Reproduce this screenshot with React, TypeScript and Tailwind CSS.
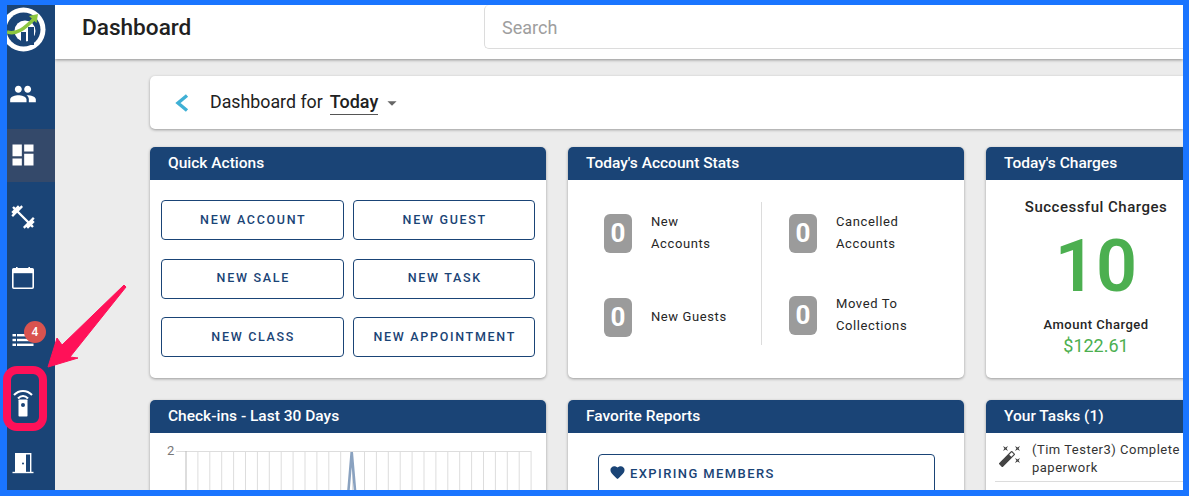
import React from 'react';
import { MdPeople, MdDashboard, MdFitnessCenter, MdArrowDropDown, MdFavorite, MdAutoFixHigh } from 'react-icons/md';

const navy = 'bg-[#1a4476]';

const Logo = () => (
  <svg width="48" height="52" viewBox="0 0 48 52">
    <circle cx="16.5" cy="24.5" r="22" fill="#fff" />
    <circle cx="16.5" cy="24.5" r="17" fill="#1a4476" />
    <circle cx="18" cy="26" r="10.5" fill="#fff" />
    <rect x="14" y="27" width="5" height="13" fill="#1a4476" />
    <rect x="21" y="22" width="6" height="18" fill="#1a4476" />
    <path d="M0 27 C10 30 18 23 27 14" fill="none" stroke="#8cc63f" strokeWidth="3.5" />
    <path d="M22 11 L31 9 L29.5 18 Z" fill="#8cc63f" />
  </svg>
);

const CalendarIcon = () => (
  <svg width="24" height="24" viewBox="0 0 24 24" fill="none">
    <rect x="1.8" y="2.8" width="20.4" height="19.4" rx="1" stroke="#fff" strokeWidth="1.6" />
    <rect x="1.8" y="2.8" width="20.4" height="4.4" fill="#fff" />
    <rect x="5" y="1" width="1.6" height="2.5" fill="#fff" />
    <rect x="17.4" y="1" width="1.6" height="2.5" fill="#fff" />
  </svg>
);

const ListIcon = () => (
  <svg width="22" height="14" viewBox="0 0 22 14" fill="#fff">
    <rect x="0.5" y="1" width="3.5" height="2.4" />
    <rect x="5" y="1" width="16.5" height="2.4" />
    <rect x="0.5" y="5.8" width="3.5" height="2.4" />
    <rect x="5" y="5.8" width="16.5" height="2.4" />
    <rect x="0.5" y="10.6" width="3.5" height="2.4" />
    <rect x="5" y="10.6" width="16.5" height="2.4" />
  </svg>
);

const RemoteIcon = () => (
  <svg width="20" height="30" viewBox="0 0 20 30" fill="none">
    <path d="M1 8 C6 2.5 14 2.5 19 8" stroke="#fff" strokeWidth="2" />
    <path d="M5 11.5 C8 8 12 8 15 11.5" stroke="#fff" strokeWidth="2" />
    <rect x="5.5" y="12.5" width="9" height="17" rx="0.8" fill="#fff" />
    <circle cx="10" cy="18" r="2" fill="#1a4476" />
  </svg>
);

const DoorIcon = () => (
  <svg width="22" height="22" viewBox="0 0 22 22" fill="none">
    <rect x="3" y="1" width="11" height="20" fill="#fff" />
    <circle cx="11" cy="11.5" r="1" fill="#1a4476" />
    <path d="M14 1.7 H18.7 V21" stroke="#fff" strokeWidth="1.4" />
    <path d="M0.5 20.5 H21.5" stroke="#fff" strokeWidth="1.4" />
  </svg>
);

const NavItem = ({ active, children }: { active?: boolean; children: React.ReactNode }) => (
  <div className={`relative h-[53px] shrink-0 flex items-center text-white ${active ? 'bg-[#34496a]' : ''}`}>
    <div className="w-[31px] flex justify-center">{children}</div>
  </div>
);

const Sidebar = () => (
  <div className={`w-[48px] shrink-0 ${navy} flex flex-col`}>
    <div className="h-[53px] shrink-0 overflow-hidden"><Logo /></div>
    <div className="flex flex-col gap-[8.67px] mt-[9px]">
      <NavItem><MdPeople size={28} /></NavItem>
      <NavItem active><MdDashboard size={28} /></NavItem>
      <NavItem><MdFitnessCenter size={28} /></NavItem>
      <NavItem><CalendarIcon /></NavItem>
      <NavItem>
        <ListIcon />
        <span className="absolute left-[17px] top-[7px] w-[22px] h-[22px] rounded-full bg-[#d9534f] text-white text-[12px] font-medium flex items-center justify-center">4</span>
      </NavItem>
      <NavItem><RemoteIcon /></NavItem>
      <NavItem><DoorIcon /></NavItem>
    </div>
  </div>
);

const Card = ({ title, className, children }: { title: string; className?: string; children: React.ReactNode }) => (
  <div className={`w-[396px] shrink-0 rounded-[5px] bg-white shadow-[0_1px_3px_rgba(0,0,0,0.35)] overflow-hidden ${className ?? ''}`}>
    <div className={`h-[33px] ${navy} px-[18px] flex items-center text-white text-[15.5px] font-medium`}>{title}</div>
    {children}
  </div>
);

const ActionButton = ({ label }: { label: string }) => (
  <div className="h-[40px] pl-[2px] rounded-[4px] border border-[#1a4476] flex items-center justify-center text-[#1a4476] text-[12.5px] font-medium tracking-[1.7px]">{label}</div>
);

const Stat = ({ lines }: { lines: string[] }) => (
  <div className="flex items-center gap-[19px] h-[40px]">
    <div className="w-[28px] h-[39px] rounded-[6px] bg-[#9b9b9b] text-white text-[26px] font-bold flex items-center justify-center">0</div>
    <div className="text-[13px] leading-[22px] tracking-[0.6px] text-[#262626]">
      {lines.map(l => <div key={l}>{l}</div>)}
    </div>
  </div>
);

const gridXs = Array.from({ length: 30 }, (_, i) => 36 + i * 11.9);

const Chart = () => (
  <svg width="396" height="57" viewBox="0 0 396 57" className="block">
    <text x="17" y="22" fontSize="13" fill="#777" fontFamily="Roboto">2</text>
    <line x1="26" x2="381" y1="18.5" y2="18.5" stroke="#ddd" />
    {gridXs.map(x => <line key={x} x1={x} x2={x} y1="18" y2="57" stroke={x === 36 ? '#bbb' : '#ddd'} />)}
    <polyline points="198.5,57 201.7,19 205,57" fill="none" stroke="#8aa2c0" strokeWidth="2.6" />
  </svg>
);

const App: React.FC = () => {
  return (
    <div className="relative w-[1189px] h-[496px] overflow-hidden font-['Roboto',sans-serif]">
      <div className="w-full h-full overflow-hidden border-solid border-[#1a75ff] border-t-[5px] border-l-[7px] border-r-[6px] border-b-[6px] bg-[#ececec] flex">
        <Sidebar />

        <main className="flex-1 min-w-0 flex flex-col overflow-hidden">
          <header className="h-[54px] shrink-0 bg-white shadow-[0_1px_3px_rgba(0,0,0,0.4)] flex items-start pl-[27px] relative z-10">
            <h1 className="w-[402px] shrink-0 h-[44px] pt-[1px] flex items-center text-[22.6px] font-medium text-[#212121]">Dashboard</h1>
            <div className="flex-1 h-[44px] pt-[1px] rounded-l-[5px] border border-r-0 border-t-0 border-[#dcdcdc] flex items-center pl-[17px] text-[18px] text-[#9e9e9e]">Search</div>
          </header>

          <div className="pl-[95px] pt-[17px] flex flex-col gap-[18px]">
            <div className="h-[53px] rounded-l-[5px] bg-white shadow-[0_1px_3px_rgba(0,0,0,0.35)] flex items-center pl-[25px] text-[#212121]">
              <svg width="14" height="18" viewBox="0 0 14 18" fill="none">
                <polyline points="12,1.5 3,9 12,16.5" stroke="#3fb0d5" strokeWidth="3.4" />
              </svg>
              <span className="ml-[21px] text-[17.8px]">Dashboard for</span>
              <span className="ml-[7px] text-[18px] font-medium border-b border-[#555] leading-[24px]">Today</span>
              <MdArrowDropDown size={22} className="ml-[3px] text-[#666]" />
            </div>

            <div className="flex gap-[22px]">
              <Card title="Quick Actions" className="h-[231px]">
                <div className="grid grid-cols-2 gap-x-[9px] gap-y-[18.5px] px-[11px] pt-[20px]">
                  <ActionButton label="NEW ACCOUNT" />
                  <ActionButton label="NEW GUEST" />
                  <ActionButton label="NEW SALE" />
                  <ActionButton label="NEW TASK" />
                  <ActionButton label="NEW CLASS" />
                  <ActionButton label="NEW APPOINTMENT" />
                </div>
              </Card>
              <Card title="Today's Account Stats" className="h-[231px]">
                <div className="flex pt-[22px] pl-[36px]">
                  <div className="w-[157px] flex flex-col gap-[44px] pt-[11px]">
                    <Stat lines={['New', 'Accounts']} />
                    <Stat lines={['New Guests']} />
                  </div>
                  <div className="w-px h-[143px] bg-[#dcdcdc]" />
                  <div className="ml-[27px] flex flex-col gap-[42px] pt-[11px]">
                    <Stat lines={['Cancelled', 'Accounts']} />
                    <Stat lines={['Moved To', 'Collections']} />
                  </div>
                </div>
              </Card>
              <Card title="Today's Charges" className="h-[231px]">
                <div className="w-[220px] flex flex-col items-center pt-[18px] text-[#262626]">
                  <div className="text-[15px] font-medium tracking-[0.5px] leading-[18px]">Successful Charges</div>
                  <div className="text-[72px] font-semibold text-[#4caf50] leading-[84px] mt-[9px]">10</div>
                  <div className="text-[13px] font-medium tracking-[0.5px] leading-[16px] mt-[8px]">Amount Charged</div>
                  <div className="text-[18px] text-[#4caf50] leading-[22px] mt-[2px]">$122.61</div>
                </div>
              </Card>
            </div>

            <div className="flex gap-[22px] mt-[4px]">
              <Card title="Check-ins - Last 30 Days" className="h-[200px]">
                <Chart />
              </Card>
              <Card title="Favorite Reports" className="h-[200px]">
                <div className="ml-[30px] w-[337px] mt-[21px] h-[60px] rounded-[4px] border border-[#1a4476] flex items-start pt-[9px] pl-[10px] text-[#1a4476] text-[13px] font-medium tracking-[1.4px]">
                  <MdFavorite size={17} className="mr-[4px]" />
                  EXPIRING MEMBERS
                </div>
              </Card>
              <Card title="Your Tasks (1)" className="h-[200px]">
                <div className="mx-[9px] h-[49px] border-b border-[#dcdcdc] flex pt-[8px] text-[#333] text-[13px] leading-[18px] tracking-[0.5px]">
                  <MdAutoFixHigh size={24} className="mt-[3px] mx-[3px] shrink-0 text-[#444]" />
                  <div className="ml-[7px] w-[190px]">(Tim Tester3) Complete paperwork</div>
                </div>
              </Card>
            </div>
          </div>
        </main>
      </div>

      {/* annotation on top of the sidebar */}
      <div className="absolute left-[3px] top-[366px] w-[44px] h-[65px] rounded-[14px] border-[8px] border-[#ff1158]" />
      <svg className="absolute left-[37px] top-[279px]" width="92" height="92" viewBox="0 0 92 92">
        <path d="M87 6 L89 8 L33 78 L41 79 L11 88 L20 59 L25 66 Z" fill="#ff1158" stroke="#ff1158" strokeLinejoin="round" />
      </svg>
    </div>
  );
};

export default App;
